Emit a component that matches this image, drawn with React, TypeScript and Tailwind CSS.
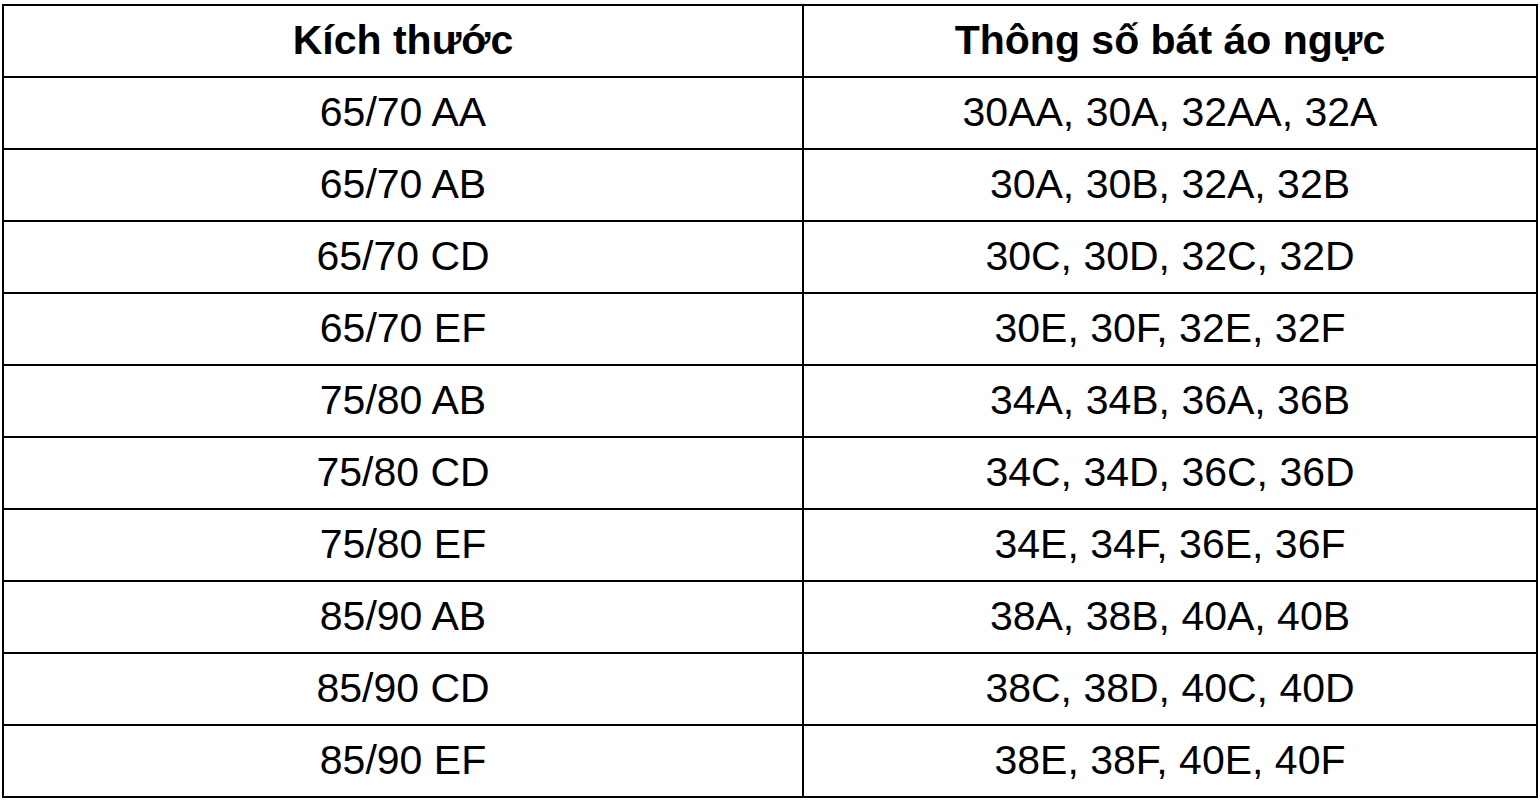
const rows: [string, string][] = [
  ["65/70 AA", "30AA, 30A, 32AA, 32A"],
  ["65/70 AB", "30A, 30B, 32A, 32B"],
  ["65/70 CD", "30C, 30D, 32C, 32D"],
  ["65/70 EF", "30E, 30F, 32E, 32F"],
  ["75/80 AB", "34A, 34B, 36A, 36B"],
  ["75/80 CD", "34C, 34D, 36C, 36D"],
  ["75/80 EF", "34E, 34F, 36E, 36F"],
  ["85/90 AB", "38A, 38B, 40A, 40B"],
  ["85/90 CD", "38C, 38D, 40C, 40D"],
  ["85/90 EF", "38E, 38F, 40E, 40F"],
]

export default function App() {
  return (
    <div className="min-h-screen bg-white pt-[4px] pl-[2px] font-['Liberation_Sans',Arial,sans-serif] text-black">
      <div className="grid w-[1536px] grid-cols-[798px_732px] auto-rows-[70px] gap-[2px] bg-black p-[2px]">
        {/* header */}
        <div className="flex items-center justify-center bg-white text-[41px] font-bold">Kích thước</div>
        <div className="flex items-center justify-center bg-white text-[41px] font-bold">Thông số bát áo ngực</div>
        {rows.map(([size, spec]) => (
          <>
            <div key={size + "a"} className="flex items-center justify-center bg-white text-[41px]">
              {size}
            </div>
            <div key={size + "b"} className="flex items-center justify-center bg-white text-[41px]">
              {spec}
            </div>
          </>
        ))}
      </div>
    </div>
  )
}
